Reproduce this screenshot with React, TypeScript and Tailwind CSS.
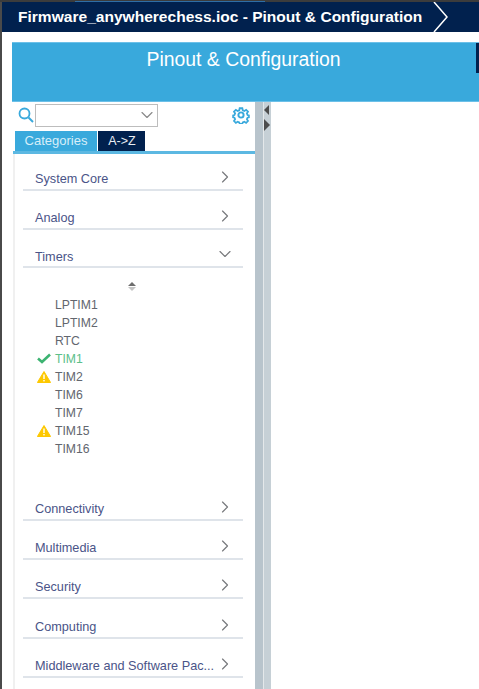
import { ChevronDown, ChevronRight } from "lucide-react";

const font = "font-['Liberation_Sans',Arial,sans-serif]";

function Category({ label, open, mt, textPt = "pt-[3px]" }: { label: string; open?: boolean; mt: string; textPt?: string }) {
  return (
    <div className={`ml-[8px] flex h-[24px] w-[220px] items-start justify-between border-b-2 border-[#dfe4ea] pl-[12px] pr-[8px] ${mt}`}>
      <span className={`whitespace-nowrap text-[12.7px] leading-[18px] text-[#4a5488] ${textPt}`}>{label}</span>
      {open ? (
        <ChevronDown className="h-[20px] w-[20px] shrink-0 text-[#77797c]" strokeWidth={1.4} />
      ) : (
        <ChevronRight className="h-[20px] w-[20px] shrink-0 text-[#77797c]" strokeWidth={1.4} />
      )}
    </div>
  );
}

function Warning() {
  return (
    <svg width="14" height="12" viewBox="0 0 14 12">
      <path d="M7 0.5 L13.6 11.5 L0.4 11.5 Z" fill="#fdc800" stroke="#fdc800" strokeLinejoin="round" />
      <rect x="6.3" y="3.5" width="1.4" height="4.5" fill="#fff" />
      <rect x="6.3" y="9" width="1.4" height="1.4" fill="#fff" />
    </svg>
  );
}

function Check() {
  return (
    <svg width="14" height="11" viewBox="0 0 14 11">
      <path d="M1 5.5 L5 9 L13 1.5" fill="none" stroke="#3cb371" strokeWidth="2.6" />
    </svg>
  );
}

const timers: { name: string; status?: "ok" | "warn" }[] = [
  { name: "LPTIM1" },
  { name: "LPTIM2" },
  { name: "RTC" },
  { name: "TIM1", status: "ok" },
  { name: "TIM2", status: "warn" },
  { name: "TIM6" },
  { name: "TIM7" },
  { name: "TIM15", status: "warn" },
  { name: "TIM16" },
];

export default function App() {
  return (
    <div className={`${font} flex h-[689px] w-[479px] flex-col overflow-hidden bg-white`}>
      <div className="flex h-[2px] items-end bg-[#3c3c3c]">
        <div className="ml-[75px] h-px w-[190px] bg-[#2f6ea5]" />
      </div>
      <div className="flex min-h-0 flex-1">
        <div className="w-[2px] bg-[#4a4a4a]" />
        <div className="flex min-w-0 flex-1 flex-col">
          {/* breadcrumb */}
          <div className="flex h-[30px] items-center justify-between bg-[#01214e]">
            <span className="pl-[16px] text-[15.55px] font-bold leading-[18px] text-white">
              Firmware_anywherechess.ioc - Pinout &amp; Configuration
            </span>
            <svg width="48" height="30" viewBox="0 0 48 30" className="shrink-0">
              <path d="M3 0 L16 15 L3 30" fill="none" stroke="#fff" strokeWidth="1.5" />
            </svg>
          </div>

          {/* blue header */}
          <div className="ml-[10px] mt-[10px] flex h-[60px] items-start border-y border-[#6cc0e8] bg-[#39a9dc]">
            <div className="flex-1 pr-[1px] pt-[5px] text-center text-[19.4px] leading-[22px] text-white">
              Pinout &amp; Configuration
            </div>
            <div className="h-[30px] w-[3px] bg-[#01214e]" />
          </div>

          <div className="flex min-h-0 flex-1">
            {/* sidebar */}
            <div className="ml-[11px] flex w-[242px] flex-col">
              <div className="flex h-[26px] items-center">
                <svg width="16" height="16" viewBox="0 0 16 16" className="ml-[5px]">
                  <circle cx="6.5" cy="6.5" r="5" fill="none" stroke="#39a9dc" strokeWidth="1.8" />
                  <path d="M10.5 10.5 L15 15" stroke="#39a9dc" strokeWidth="2" />
                </svg>
                <div className="ml-[1px] flex h-[23px] w-[123px] items-center justify-end border border-[#bdbdbd]">
                  <ChevronDown className="h-[20px] w-[20px] text-[#8a8a8a]" strokeWidth={1.4} />
                </div>
                <svg width="18" height="18" viewBox="0 0 24 24" className="ml-[74px]" fill="none" stroke="#39a9dc" strokeWidth="2.6">
                  <circle cx="12" cy="12" r="3.5" />
                  <path d="M10 2h4l.6 3 2.4 1 2.6-1.700 2.800 2.800L20.700 9.700l1 2.300 2 .5v3l-2 .5-1 2.300 1.700 2.600-2.800 2.800-2.600-1.700-2.400 1-.6 2h-4l-.6-2-2.400-1-2.600 1.700-2.800-2.800 1.700-2.600-1-2.300-2-.5v-3l2-.5 1-2.300L1.600 7.100l2.800-2.800L7 6l2.400-1z" transform="translate(1.200 1.200) scale(.9)" />
                </svg>
              </div>
              <div className="flex h-[23px] items-stretch pl-[2px] pt-[3px] leading-[18px]">
                <div className="flex w-[82px] items-center justify-center bg-[#39a9dc] text-[13px] text-[#d6eef9]">Categories</div>
                <div className="ml-[1px] flex w-[47px] items-center justify-center bg-[#01214e] pl-[1px] text-[12.5px] text-[#e8edf3]">A-&gt;Z</div>
              </div>
              <div className="h-[3px] bg-[#5cb8e2]" />
              <div className="min-h-0 flex-1 border-l-2 border-[#f0f0f0]">
                <Category label="System Core" mt="mt-[13px]" />
                <Category label="Analog" mt="mt-[15px]" />
                <Category label="Timers" open mt="mt-[14px]" textPt="pt-[4px]" />
                <div className="relative ml-[29px] h-[229px] pt-[28px] text-[12.2px] leading-[18px] text-[#62666e]">
                  <div className="absolute left-[84px] top-[14px] flex flex-col gap-[1px]">
                    <div className="h-0 w-0 border-x-[4px] border-b-[4px] border-x-transparent border-b-[#6e6e6e]" />
                    <div className="h-0 w-0 border-x-[4px] border-t-[4px] border-x-transparent border-t-[#c4c4c4]" />
                  </div>
                  {timers.map((t) => (
                    <div key={t.name} className="relative pl-[11px]">
                      {t.status && (
                        <span className="absolute left-[-7px] top-[3px]">
                          {t.status === "ok" ? <Check /> : <Warning />}
                        </span>
                      )}
                      <span className={t.status === "ok" ? "text-[#5cc08a]" : ""}>{t.name}</span>
                    </div>
                  ))}
                </div>
                <Category label="Connectivity" mt="mt-0" />
                <Category label="Multimedia" mt="mt-[15px]" />
                <Category label="Security" mt="mt-[15px]" />
                <Category label="Computing" mt="mt-[16px]" />
                <Category label="Middleware and Software Pac..." mt="mt-[15px]" />
              </div>
            </div>

            {/* splitter */}
            <div className="w-[8px] bg-[#b8c4cc]" />
            <div className="relative w-[8px] border-l border-[#e4e8ea] bg-[#c6d0d6]">
              <div className="absolute left-0 top-[3px] h-0 w-0 border-y-[5px] border-r-[5px] border-y-transparent border-r-[#4d4d4d]" />
              <div className="absolute left-0 top-[17px] h-0 w-0 border-y-[6px] border-l-[6px] border-y-transparent border-l-[#4d4d4d]" />
            </div>
            <div className="flex-1 bg-white" />
          </div>
        </div>
      </div>
    </div>
  );
}
